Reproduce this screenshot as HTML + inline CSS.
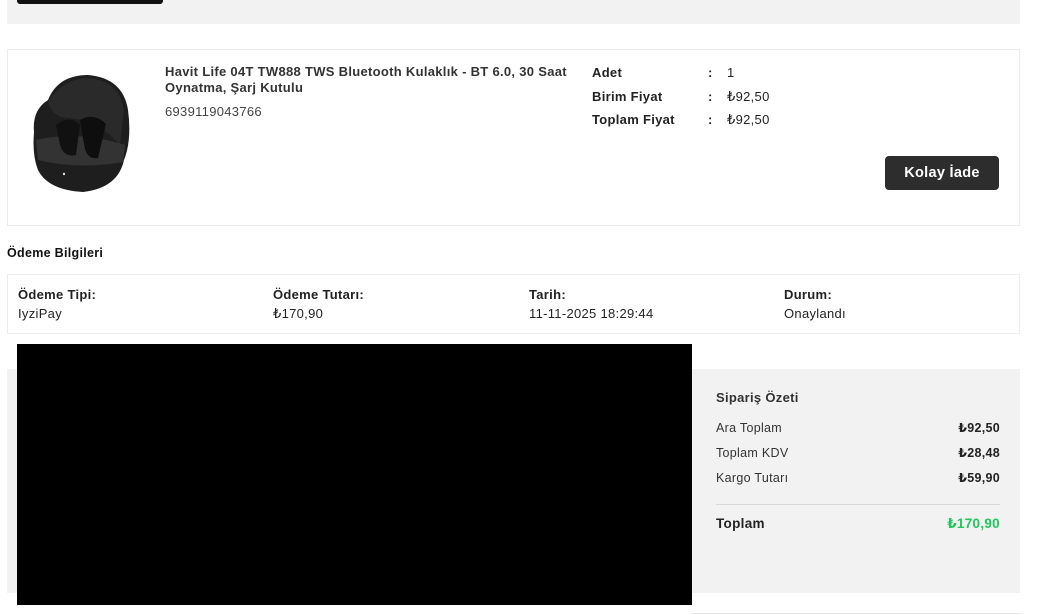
<!DOCTYPE html>
<html><head><meta charset="utf-8"><style>
*{margin:0;padding:0;box-sizing:border-box}
body{width:1037px;height:615px;background:#fff;font-family:"Liberation Sans","DejaVu Sans",sans-serif;color:#222;position:relative;overflow:hidden}
.a{position:absolute;white-space:nowrap;letter-spacing:0.3px}
.b{font-weight:bold}
</style></head><body>
<div class="a" style="left:7px;top:0;width:1013px;height:24px;background:#f2f2f2"></div>
<div class="a" style="left:17px;top:0;width:146px;height:4px;background:#111;border-radius:0 0 3px 3px"></div>

<div class="a" style="left:7px;top:49px;width:1013px;height:177px;border:1px solid #ececec"></div>
<svg class="a" style="left:28px;top:70px" width="108" height="128" viewBox="0 0 108 128">
<path d="M6 62 Q4 40 20 30 Q30 5 60 5 Q95 8 100 40 Q104 70 96 90 Q90 118 55 122 Q20 120 10 100 Q4 85 6 62Z" fill="#1e1e1e"/>
<path d="M20 32 Q35 8 62 8 Q92 12 96 40 L92 75 Q70 50 40 48 Q25 48 20 32Z" fill="#2a2a2a"/>
<path d="M8 70 Q50 60 97 75 L95 92 Q50 100 10 90Z" fill="#333"/>
<path d="M28 55 Q42 44 52 55 L48 85 Q36 88 32 75Z" fill="#111"/>
<path d="M52 50 Q66 42 78 54 L70 88 Q58 90 56 74Z" fill="#0e0e0e"/>
<circle cx="36" cy="104" r="1.2" fill="#ddd"/>
</svg>
<div class="a b" style="left:165px;top:64px;font-size:13px;line-height:16px;color:#333">Havit Life 04T TW888 TWS Bluetooth Kulaklık - BT 6.0, 30 Saat<br>Oynatma, Şarj Kutulu</div>
<div class="a" style="left:165px;top:104px;font-size:13px;color:#444">6939119043766</div>

<div class="a b" style="left:592px;top:61px;font-size:13px;line-height:23.5px">Adet<br>Birim Fiyat<br>Toplam Fiyat</div>
<div class="a b" style="left:708px;top:61px;font-size:13px;line-height:23.5px">:<br>:<br>:</div>
<div class="a" style="left:727px;top:61px;font-size:13px;line-height:23.5px">1<br>₺92,50<br>₺92,50</div>
<div class="a b" style="left:885px;top:156px;width:114px;height:34px;background:#2d2d2d;color:#fff;border-radius:4px;font-size:14.5px;text-align:center;line-height:34px">Kolay İade</div>

<div class="a b" style="left:7px;top:246px;font-size:12.5px;color:#111">Ödeme Bilgileri</div>
<div class="a" style="left:7px;top:274px;width:1013px;height:60px;border:1px solid #ececec"></div>
<div class="a" style="left:18px;top:285px;font-size:13px;line-height:19px"><b>Ödeme Tipi:</b><br>IyziPay</div>
<div class="a" style="left:273px;top:285px;font-size:13px;line-height:19px"><b>Ödeme Tutarı:</b><br>₺170,90</div>
<div class="a" style="left:529px;top:285px;font-size:13px;line-height:19px"><b>Tarih:</b><br>11-11-2025 18:29:44</div>
<div class="a" style="left:784px;top:285px;font-size:13px;line-height:19px"><b>Durum:</b><br>Onaylandı</div>

<div class="a" style="left:7px;top:369px;width:1013px;height:224px;background:#f2f2f2"></div>
<div class="a" style="left:17px;top:344px;width:675px;height:261px;background:#000"></div>
<div class="a b" style="left:716px;top:390px;font-size:13px;color:#333">Sipariş Özeti</div>
<div class="a" style="left:716px;top:416px;font-size:12.5px;line-height:25px;color:#333">Ara Toplam<br>Toplam KDV<br>Kargo Tutarı</div>
<div class="a b" style="left:900px;top:416px;width:100px;text-align:right;font-size:12.5px;line-height:25px;color:#222">₺92,50<br>₺28,48<br>₺59,90</div>
<div class="a" style="left:716px;top:504px;width:284px;height:1px;background:#d8d8d8"></div>
<div class="a b" style="left:716px;top:516px;font-size:13.5px;color:#222">Toplam</div>
<div class="a b" style="left:900px;top:516px;width:100px;text-align:right;font-size:13.5px;color:#1ec85a">₺170,90</div>
<div class="a" style="left:692px;top:613px;width:330px;height:1px;background:#e8e8e8"></div>
</body></html>
